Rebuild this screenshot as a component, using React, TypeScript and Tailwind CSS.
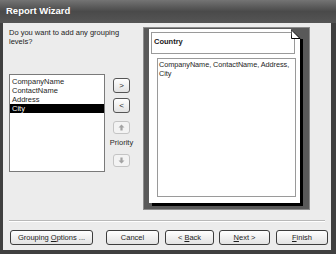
import React from 'react';

const btn =
  'h-[15px] rounded-[3px] border border-[#3c3c3c] bg-gradient-to-b from-[#ffffff] to-[#e2e2e2] text-[7.5px] leading-[13px] text-[#1e1e1e] flex items-center justify-center';

const Arrow = ({ down }: { down?: boolean }) => (
  <svg width="7" height="7" viewBox="0 0 7 7" className={down ? 'rotate-180' : ''}>
    <polygon points="3.5,0.5 6.5,3.5 4.6,3.5 4.6,6.5 2.4,6.5 2.4,3.5 0.5,3.5" fill="#a3a3a3" />
  </svg>
);

const App = () => {
  const fields = ['CompanyName', 'ContactName', 'Address', 'City'];

  return (
    <div className="w-[336px] h-[254px] bg-[#404040] flex flex-col font-['Liberation_Sans',Arial,sans-serif] overflow-hidden">
      {/* Title bar */}
      <div className="h-[23px] flex items-center px-[6px] bg-gradient-to-b from-[#747474] via-[#4a4a4a] to-[#555555]">
        <span className="text-white font-bold text-[9.5px]">Report Wizard</span>
      </div>

      {/* Body */}
      <div className="flex-1 ml-[3px] mr-[5px] mb-[4px] bg-[#ececec] flex flex-col">
        <div className="flex pt-[4px] pl-[6px]">
          {/* Left column */}
          <div className="w-[134px] flex flex-col">
            <p className="mt-[1px] text-[7.5px] leading-[9px] text-[#222] w-[120px]">
              Do you want to add any grouping levels?
            </p>
            <div className="flex mt-[28px]">
              <div className="w-[96px] h-[98px] bg-white border border-[#7a7a7a] pt-[2px]">
                {fields.map((f) => (
                  <div
                    key={f}
                    className={`h-[9px] leading-[9px] text-[7.5px] pl-[2px] ${
                      f === 'City' ? 'bg-black text-white' : 'text-[#1e1e1e]'
                    }`}
                  >
                    {f}
                  </div>
                ))}
              </div>
              <div className="ml-[8px] w-[17px] flex flex-col items-center">
                <div className={`${btn} w-[17px] h-[14px] mt-[4px] border-[#555] text-[8px]`}>&gt;</div>
                <div className={`${btn} w-[17px] h-[14px] mt-[5px] border-[#555] text-[8px]`}>&lt;</div>
                <div className="w-[17px] h-[13px] mt-[8px] rounded-[3px] border border-[#c4c4c4] bg-[#f3f3f3] flex items-center justify-center">
                  <Arrow />
                </div>
                <div className="mt-[2px] h-[14px] leading-[14px] text-[7.5px] text-[#2a2a2a] whitespace-nowrap">Priority</div>
                <div className="w-[17px] h-[13px] mt-[4px] rounded-[3px] border border-[#c4c4c4] bg-[#f3f3f3] flex items-center justify-center">
                  <Arrow down />
                </div>
              </div>
            </div>
          </div>

          {/* Preview panel */}
          <div className="w-[167px] h-[183px] bg-[#595959] border border-[#8c8c8c] pl-[5px] pt-[1px]">
            <div className="relative w-[151px] h-[174px] bg-white shadow-[3px_3px_0_#000] pt-[3px] pl-[2px]">
              <div className="w-[144px] h-[22px] border border-[#9a9a9a] px-[2px] pt-[4px] text-[7.5px] leading-[9px] font-bold text-[#1a1a1a]">
                Country
              </div>
              <div className="ml-[6px] mt-[4px] w-[139px] h-[139px] border border-[#9a9a9a] pl-[1px] pt-[1px] text-[7.3px] leading-[9px] text-[#1e1e1e] tracking-[-0.05px]">
                CompanyName, ContactName, Address, City
              </div>
              <svg width="13" height="10" viewBox="0 0 13 10" className="absolute top-0 right-[-4px]">
                <polygon points="0,0 13,0 13,10 9,10" fill="#595959" />
                <polygon points="0,0.5 9,9.5 0.5,9.5" fill="#fff" stroke="#000" strokeWidth="1" />
              </svg>
            </div>
          </div>
        </div>

        {/* Separator */}
        <div className="mt-[10px] mx-[6px] h-[2px] border-t border-[#b9b9b9] border-b border-b-white" />

        {/* Buttons */}
        <div className="flex mt-[8px] pl-[7px]">
          <div className={`${btn} w-[83px]`}>
            <span>
              Grouping <u>O</u>ptions ...
            </span>
          </div>
          <div className={`${btn} w-[53px] ml-[13px]`}>Cancel</div>
          <div className={`${btn} w-[49px] ml-[6px]`}>
            <span>
              &lt; <u>B</u>ack
            </span>
          </div>
          <div className={`${btn} w-[51px] ml-[5px]`}>
            <span>
              <u>N</u>ext &gt;
            </span>
          </div>
          <div className={`${btn} w-[52px] ml-[6px]`}>
            <span>
              <u>F</u>inish
            </span>
          </div>
        </div>
      </div>
    </div>
  );
};

export default App;
